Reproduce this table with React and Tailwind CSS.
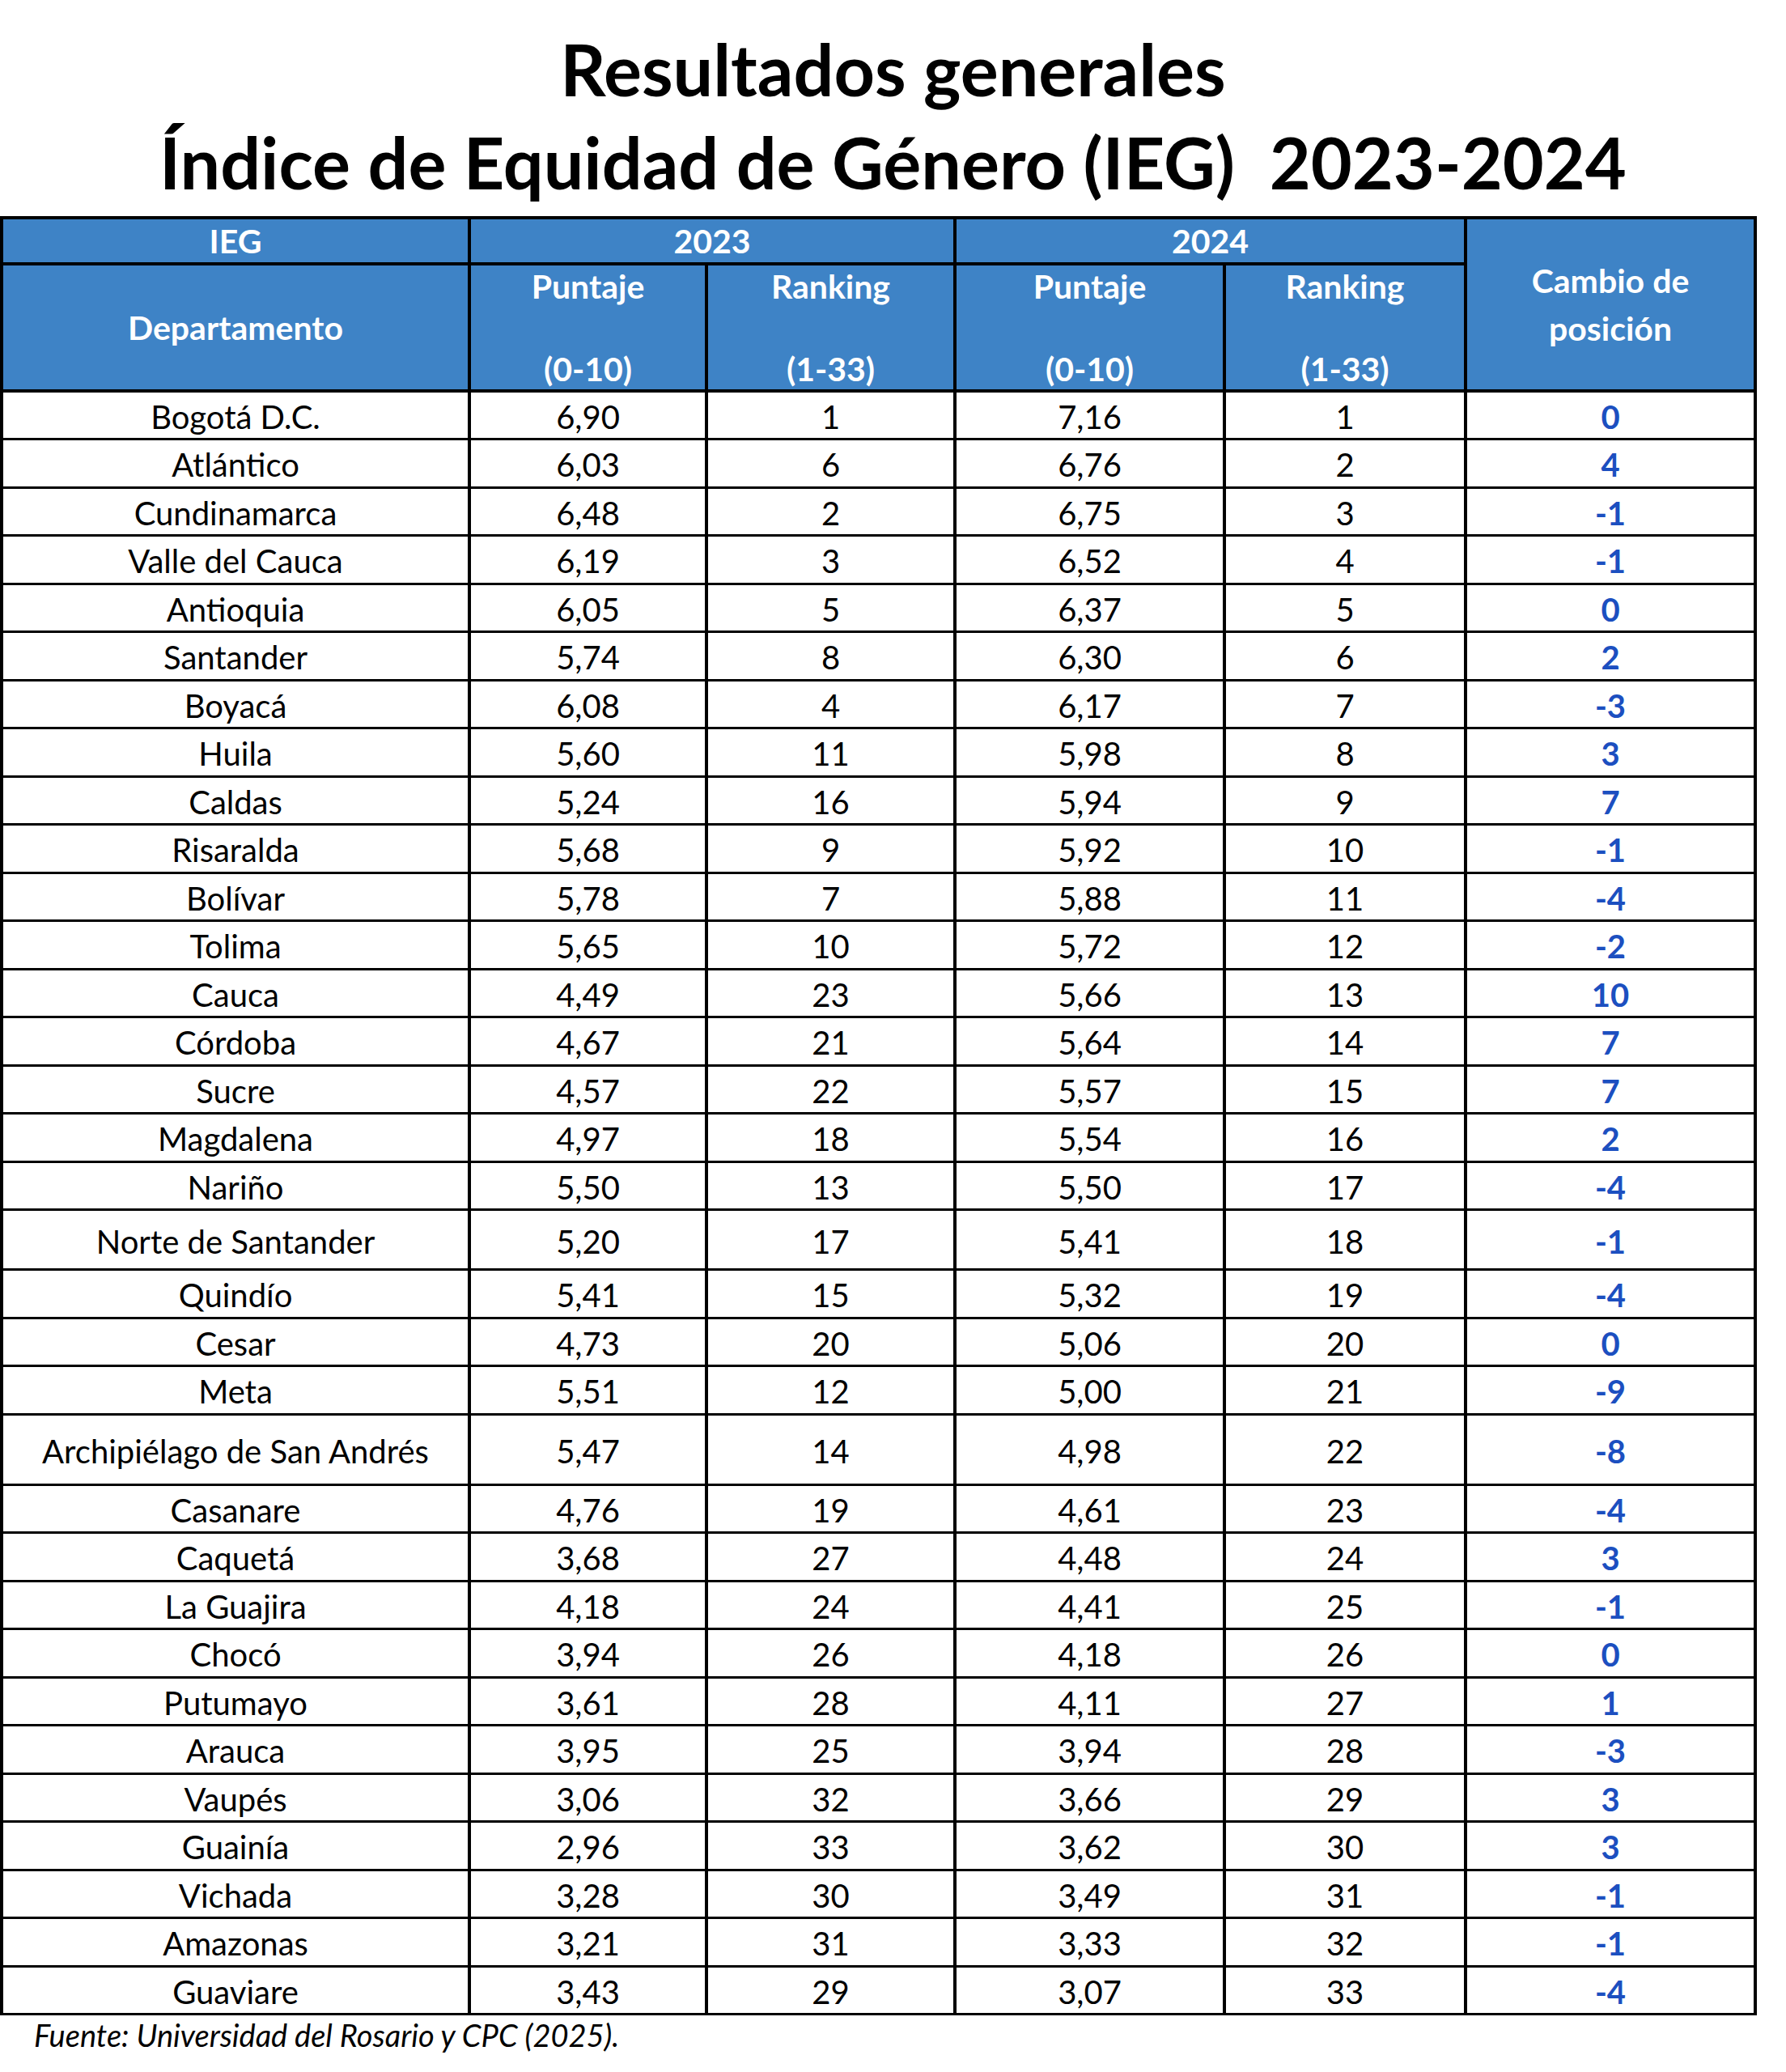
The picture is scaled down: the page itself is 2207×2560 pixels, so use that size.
import React from "react";

const rows = [
  ["Bogotá D.C.", "6,90", "1", "7,16", "1", "0"],
  ["Atlántico", "6,03", "6", "6,76", "2", "4"],
  ["Cundinamarca", "6,48", "2", "6,75", "3", "-1"],
  ["Valle del Cauca", "6,19", "3", "6,52", "4", "-1"],
  ["Antioquia", "6,05", "5", "6,37", "5", "0"],
  ["Santander", "5,74", "8", "6,30", "6", "2"],
  ["Boyacá", "6,08", "4", "6,17", "7", "-3"],
  ["Huila", "5,60", "11", "5,98", "8", "3"],
  ["Caldas", "5,24", "16", "5,94", "9", "7"],
  ["Risaralda", "5,68", "9", "5,92", "10", "-1"],
  ["Bolívar", "5,78", "7", "5,88", "11", "-4"],
  ["Tolima", "5,65", "10", "5,72", "12", "-2"],
  ["Cauca", "4,49", "23", "5,66", "13", "10"],
  ["Córdoba", "4,67", "21", "5,64", "14", "7"],
  ["Sucre", "4,57", "22", "5,57", "15", "7"],
  ["Magdalena", "4,97", "18", "5,54", "16", "2"],
  ["Nariño", "5,50", "13", "5,50", "17", "-4"],
  ["Norte de Santander", "5,20", "17", "5,41", "18", "-1", "tall"],
  ["Quindío", "5,41", "15", "5,32", "19", "-4"],
  ["Cesar", "4,73", "20", "5,06", "20", "0"],
  ["Meta", "5,51", "12", "5,00", "21", "-9"],
  ["Archipiélago de San Andrés", "5,47", "14", "4,98", "22", "-8", "taller"],
  ["Casanare", "4,76", "19", "4,61", "23", "-4"],
  ["Caquetá", "3,68", "27", "4,48", "24", "3"],
  ["La Guajira", "4,18", "24", "4,41", "25", "-1"],
  ["Chocó", "3,94", "26", "4,18", "26", "0"],
  ["Putumayo", "3,61", "28", "4,11", "27", "1"],
  ["Arauca", "3,95", "25", "3,94", "28", "-3"],
  ["Vaupés", "3,06", "32", "3,66", "29", "3"],
  ["Guainía", "2,96", "33", "3,62", "30", "3"],
  ["Vichada", "3,28", "30", "3,49", "31", "-1"],
  ["Amazonas", "3,21", "31", "3,33", "32", "-1"],
  ["Guaviare", "3,43", "29", "3,07", "33", "-4"],
];

const th = "border-4 border-black bg-[#3e83c6] text-white font-bold text-[41px] leading-[48px] text-center align-middle p-0";
const td = "border-x-4 border-y-[3px] border-black text-center align-middle p-0 pt-1 text-[40px] leading-[46px]";

export default function App() {
  return (
    <div className="w-[2207px] min-h-[2560px] bg-white text-black font-['Lato',sans-serif]">
      <div className="h-[267px] pt-[29px] text-center font-bold text-[88px] leading-[112px] whitespace-pre">
        <div>Resultados generales</div>
        <div className="mt-[3px]">Índice de Equidad de Género (IEG)  2023-2024</div>
      </div>

      <table className="table-fixed border-collapse w-[2167px]">
        <colgroup>
          <col className="w-[578px]" />
          <col className="w-[293px]" />
          <col className="w-[307px]" />
          <col className="w-[333px]" />
          <col className="w-[298px]" />
          <col className="w-[358px]" />
        </colgroup>
        <thead>
          <tr className="h-[57px]">
            <th className={th}>IEG</th>
            <th className={th} colSpan={2}>2023</th>
            <th className={th} colSpan={2}>2024</th>
            <th className={`${th} leading-[59px]`} rowSpan={2}>Cambio de<br />posición</th>
          </tr>
          <tr className="h-[156px]">
            <th className={th}>Departamento</th>
            <th className={`${th} leading-[51px]`}>Puntaje<br /><br />(0-10)</th>
            <th className={`${th} leading-[51px]`}>Ranking<br /><br />(1-33)</th>
            <th className={`${th} leading-[51px]`}>Puntaje<br /><br />(0-10)</th>
            <th className={`${th} leading-[51px]`}>Ranking<br /><br />(1-33)</th>
          </tr>
        </thead>
        <tbody>
          {rows.map((r) => (
            <tr
              key={r[0]}
              className={r[6] === "tall" ? "h-[74px]" : r[6] === "taller" ? "h-[87px]" : "h-[59.5px]"}
            >
              <td className={td}>{r[0]}</td>
              <td className={td}>{r[1]}</td>
              <td className={td}>{r[2]}</td>
              <td className={td}>{r[3]}</td>
              <td className={td}>{r[4]}</td>
              <td className={`${td} font-bold text-[#1c4fc0]`}>{r[5]}</td>
            </tr>
          ))}
        </tbody>
      </table>

      <p className="pl-[42px] pt-[2px] italic text-[38px] leading-[44px]">
        Fuente: Universidad del Rosario y CPC (2025).
      </p>
    </div>
  );
}
